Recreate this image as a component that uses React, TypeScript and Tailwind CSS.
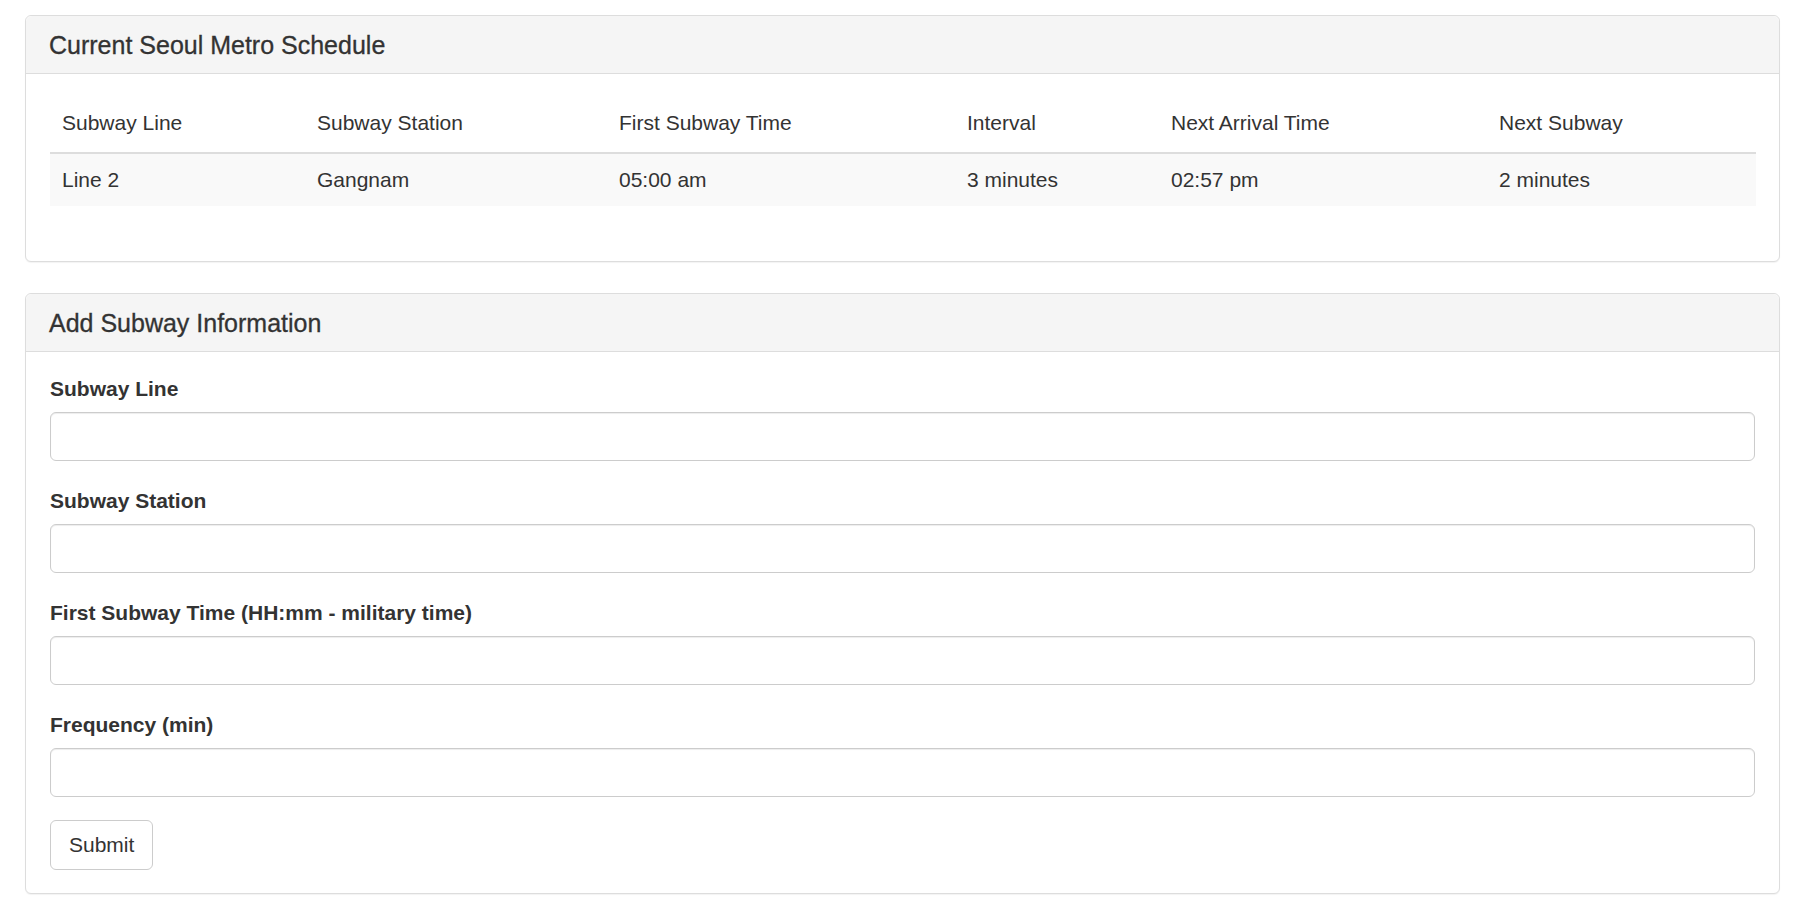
const columns = [
  { label: "Subway Line", width: "w-[255px]" },
  { label: "Subway Station", width: "w-[302px]" },
  { label: "First Subway Time", width: "w-[348px]" },
  { label: "Interval", width: "w-[204px]" },
  { label: "Next Arrival Time", width: "w-[328px]" },
  { label: "Next Subway", width: "w-[269px]" },
];

const rows = [["Line 2", "Gangnam", "05:00 am", "3 minutes", "02:57 pm", "2 minutes"]];

const fields = [
  "Subway Line",
  "Subway Station",
  "First Subway Time (HH:mm - military time)",
  "Frequency (min)",
];

function Panel({ title, children }: { title: string; children: React.ReactNode }) {
  return (
    <div className="bg-white border border-[#dddddd] rounded-[6px] shadow-[0_1px_1px_rgba(0,0,0,0.05)]">
      <div className="bg-[#f5f5f5] border-b border-[#dddddd] rounded-t-[6px] px-[23px] pt-[15px] pb-[14px]">
        <h3 className="text-[25px] leading-[28px] text-[#333333] [-webkit-text-stroke:0.3px_#333333]">{title}</h3>
      </div>
      {children}
    </div>
  );
}

export default function App() {
  return (
    <div
      className="min-h-screen bg-white text-[#333333] pl-[25px] pr-[22px] pt-[15px]"
      style={{ fontFamily: '"Liberation Sans", Arial, sans-serif' }}
    >
      {/* Schedule table */}
      <div className="mb-[31px]">
        <Panel title="Current Seoul Metro Schedule">
          <div className="px-[24px] pt-[26px] pb-[55px]">
            <table className="w-full table-fixed border-collapse text-[21px] leading-[28px]">
              <thead>
                <tr>
                  {columns.map((col) => (
                    <th
                      key={col.label}
                      className={`${col.width} text-left font-normal px-[12px] pt-[9px] pb-[15px] border-b-2 border-[#dddddd]`}
                    >
                      {col.label}
                    </th>
                  ))}
                </tr>
              </thead>
              <tbody>
                {rows.map((row, i) => (
                  <tr key={i} className="bg-[#f9f9f9]">
                    {row.map((cell, j) => (
                      <td key={j} className="px-[12px] py-[12px]">
                        {cell}
                      </td>
                    ))}
                  </tr>
                ))}
              </tbody>
            </table>
          </div>
        </Panel>
      </div>

      {/* Add form */}
      <Panel title="Add Subway Information">
        <form className="px-[24px] pt-[23px] pb-[23px]" onSubmit={(e) => e.preventDefault()}>
          {fields.map((field, i) => (
            <div key={field} className={i === fields.length - 1 ? "mb-[23px]" : "mb-[26px]"}>
              <label className="block text-[21px] leading-[28px] font-bold mb-[9px]">{field}</label>
              <input
                type="text"
                className="block w-full h-[49px] px-[17px] text-[21px] bg-white border border-[#cccccc] rounded-[6px] shadow-[inset_0_1px_1px_rgba(0,0,0,0.075)] outline-none"
              />
            </div>
          ))}
          <button
            type="submit"
            className="block bg-white border border-[#cccccc] rounded-[6px] px-[18px] py-[10px] text-[21px] leading-[28px] text-[#333333]"
          >
            Submit
          </button>
        </form>
      </Panel>
    </div>
  );
}
